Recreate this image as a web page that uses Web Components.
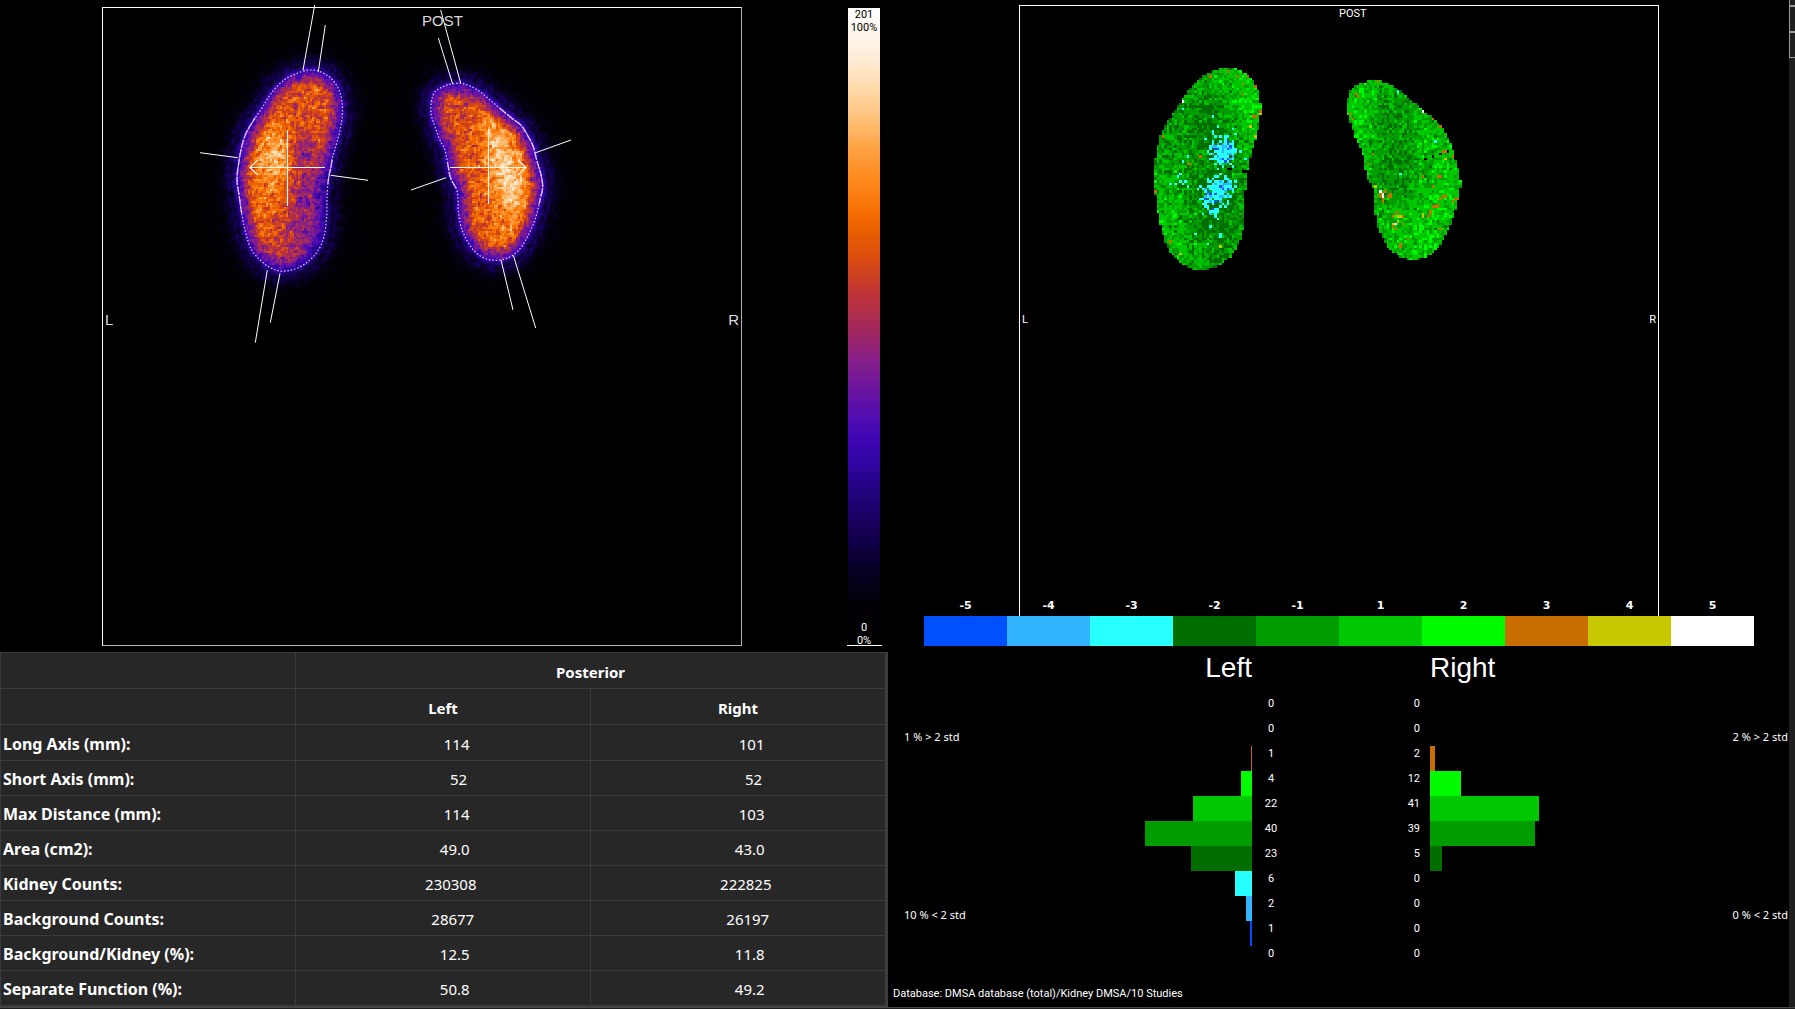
<!DOCTYPE html>
<html lang="en">
<head>
<meta charset="utf-8">
<title>DMSA Kidney Analysis</title>
<style>
  html, body { margin: 0; background: #1e1e1e; color: #fff; }
  body { font-family: Roboto, "Noto Sans", "Liberation Sans", sans-serif; font-size: 11px; line-height: 16px; }
</style>
</head>
<body>
<dmsa-workspace>
  <scan-panel slot="scan">
    <scan-frame large>
      <kidney-scan></kidney-scan>
      <span slot="top">POST</span><span slot="left">L</span><span slot="right">R</span>
    </scan-frame>
    <count-scale slot="scale" max="201" min="0"></count-scale>
  </scan-panel>
  <result-table slot="results"></result-table>
  <deviation-panel slot="deviation">
    <scan-frame>
      <deviation-map></deviation-map>
      <span slot="top">POST</span><span slot="left">L</span><span slot="right">R</span>
    </scan-frame>
    <deviation-legend slot="legend"></deviation-legend>
    <deviation-histogram slot="histograms" side="left" above="1 % &gt; 2 std" below="10 % &lt; 2 std"
      counts="0,0,1,4,22,40,23,6,2,1,0" sizes="0,0,1,11,59,107,61,17,6,2,0">Left</deviation-histogram>
    <deviation-histogram slot="histograms" side="right" above="2 % &gt; 2 std" below="0 % &lt; 2 std"
      counts="0,0,2,12,41,39,5,0,0,0,0" sizes="0,0,5,31,109,105,12,0,0,0,0">Right</deviation-histogram>
    <span slot="database">Database: DMSA database (total)/Kidney DMSA/10 Studies</span>
  </deviation-panel>
</dmsa-workspace>

<script>
/* ---------- shared data ---------- */
const LEVELS = {
  '-5': '#0050ff', '-4': '#32b4ff', '-3': '#28ffff', '-2': '#006e00', '-1': '#009c00',
  '1': '#00c800', '2': '#00fa00', '3': '#c86e00', '4': '#c8c800', '5': '#ffffff'
};
const SCALE = [
  [0, '#000000'], [.063, '#020006'], [.118, '#080024'], [.18, '#150055'], [.235, '#20037a'],
  [.287, '#3004a2'], [.32, '#3c06b2'], [.355, '#500cb2'], [.4, '#6a14a0'], [.447, '#861f88'],
  [.494, '#a2285e'], [.55, '#be3438'], [.604, '#d84a10'], [.65, '#e86000'], [.672, '#f56a00'],
  [.722, '#ff8518'], [.777, '#ffa040'], [.824, '#ffc078'], [.88, '#ffdcb0'], [.934, '#fff0e2'], [1, '#ffffff']
];
/* Rounds an outline off with a Catmull-Rom spline, four points for each control point. */
function smooth(pts) {
  const n = pts.length, out = [];
  for (let i = 0; i < n; i++) {
    const [a, b, c, d] = [-1, 0, 1, 2].map(k => pts[(i + k + n) % n]);
    for (let t = 0; t < 1; t += .25)
      out.push([0, 1].map(k => .5 * (2 * b[k] + (c[k] - a[k]) * t + (2 * a[k] - 5 * b[k] + 4 * c[k] - d[k]) * t * t
        + (3 * b[k] - a[k] - 3 * c[k] + d[k]) * t * t * t)));
  }
  return out;
}
const toFrame = (points, x, y) => smooth(points.map(p => [x + p[0] / 3, y + p[1] / 3]));
const LEFT_KIDNEY = toFrame([[340,213],[362,210],[385,213],[420,232],[443,262],[455,300],[457,345],[450,390],[440,430],
  [428,470],[423,500],[415,540],[411,590],[410,650],[402,710],[385,750],[360,780],[325,803],[280,814],[240,803],
  [205,775],[180,740],[165,690],[155,640],[148,590],[141,540],[146,490],[155,440],[168,400],[190,362],[215,325],
  [240,285],[265,255],[295,232]], 88, -7);
const RIGHT_KIDNEY = toFrame([[188,252],[212,250],[240,258],[270,275],[300,300],[330,325],[360,350],[395,378],[415,410],
  [430,440],[440,480],[452,520],[458,560],[450,600],[438,650],[420,695],[395,740],[365,768],[330,780],[290,777],
  [255,755],[230,720],[213,680],[205,630],[202,575],[182,535],[174,495],[165,450],[150,420],[135,380],[123,340],
  [125,300],[135,275],[165,257]], 288, -7);

/* ---------- helpers ---------- */
function random(seed) {
  return () => {
    seed = seed + 0x6D2B79F5 | 0;
    let t = Math.imul(seed ^ seed >>> 15, 1 | seed);
    t = t + Math.imul(t ^ t >>> 7, 61 | t) ^ t;
    return ((t ^ t >>> 14) >>> 0) / 4294967296;
  };
}
function gaussian(rnd) { return (rnd() + rnd() + rnd() + rnd() - 2) * 1.73; }
function bump(x, y, cx, cy, sx, sy, tilt = 0) {
  const dy = y - cy, dx = x - cx - tilt * dy;
  return Math.exp(-(dx * dx) / (2 * sx * sx) - (dy * dy) / (2 * sy * sy));
}
/* Signed distance to a closed outline, positive inside. */
function depth(poly, x, y) {
  let best = Infinity, inside = false;
  for (let i = 0, j = poly.length - 1; i < poly.length; j = i++) {
    const [ax, ay] = poly[j], [bx, by] = poly[i];
    const vx = bx - ax, vy = by - ay;
    const t = Math.max(0, Math.min(1, ((x - ax) * vx + (y - ay) * vy) / (vx * vx + vy * vy)));
    best = Math.min(best, (x - ax - t * vx) ** 2 + (y - ay - t * vy) ** 2);
    if ((ay > y) !== (by > y) && x < vx * (y - ay) / vy + ax) inside = !inside;
  }
  return Math.sqrt(best) * (inside ? 1 : -1);
}
function hex(c) { return [1, 3, 5].map(i => parseInt(c.substr(i, 2), 16)); }
function scaleColour(v) {
  v = Math.max(0, Math.min(1, v));
  let i = 1;
  while (i < SCALE.length - 1 && SCALE[i][0] < v) i++;
  const [a, ca] = SCALE[i - 1], [b, cb] = SCALE[i], t = (v - a) / (b - a), p = hex(ca), q = hex(cb);
  return `rgb(${p.map((n, k) => Math.round(n + (q[k] - n) * t)).join()})`;
}
/* Turns a map of colour -> cells into one path for each colour. */
function cellPaths(groups, size) {
  let out = '';
  for (const [fill, cells] of groups)
    out += `<path fill="${fill}" d="${cells.map(([x, y]) => `M${x} ${y}h${size}v${size}h-${size}z`).join('')}"/>`;
  return out;
}
function push(groups, key, cell) {
  if (!groups.has(key)) groups.set(key, []);
  groups.get(key).push(cell);
}
const lineOf = pts => 'M' + pts.map(p => p.map(n => n.toFixed(1)).join(' ')).join('L');

class View extends HTMLElement {
  connectedCallback() {
    if (this.shadowRoot) return;
    this.attachShadow({ mode: 'open' }).innerHTML = this.render();
  }
}

/* ---------- layout ---------- */
customElements.define('dmsa-workspace', class extends View {
  render() {
    return `<style>
      :host { display: grid; grid-template-columns: minmax(0, 888fr) minmax(0, 901fr) 6px; min-height: 100vh;
        box-sizing: border-box; background: #000; grid-template-rows: 1fr 2px; }
      main { display: contents; }
      .column { display: flex; flex-direction: column; min-width: 0; }
      .foot { grid-column: 1 / -1; background: #1e1e1e; border-top: 1px solid #484848; }
      .dock { background: #1f1f1f; }
      .dock i { display: block; box-sizing: border-box; height: 26px; border: 1px solid #999; border-right: 0; }
      .dock i:first-child { height: 6px; border-top: 0; }
    </style>
    <main>
      <section class="column"><slot name="scan"></slot><slot name="results"></slot></section>
      <section class="column"><slot name="deviation"></slot></section>
      <aside class="dock"><i></i><i></i><i></i></aside>
      <div class="foot"></div>
    </main>`;
  }
});

customElements.define('scan-panel', class extends View {
  render() {
    return `<style>
      :host { display: grid; grid-template-columns: 102fr 640fr 105fr 35fr 6fr; padding: 7px 0 6px; }
      .image { grid-column: 2; } .scale { grid-column: 4; display: grid; }
    </style><div class="image"><slot></slot></div><div class="scale"><slot name="scale"></slot></div>`;
  }
});

customElements.define('scan-frame', class extends View {
  render() {
    return `<style>
      :host { display: block; position: relative; box-sizing: border-box; aspect-ratio: 640 / 639; border: 1px solid #fff; }
      ::slotted(span) { position: absolute; }
      ::slotted([slot=top]) { top: 0; left: 50%; }
      ::slotted([slot=left]) { bottom: calc(50% - 3px); left: 2px; }
      ::slotted([slot=right]) { bottom: calc(50% - 3px); right: 2px; }
      :host([large]) { font: 15px/20px "Liberation Sans", Arial, sans-serif; color: #dcdcdc; border-color: #fff #b4b4b4 #b4b4b4 #fff; }
      :host([large]) ::slotted([slot=top]) { top: 3px; }
    </style><slot></slot><slot name="top"></slot><slot name="left"></slot><slot name="right"></slot>`;
  }
});

/* ---------- count image ---------- */
customElements.define('kidney-scan', class extends View {
  cells() {
    const rnd = random(41), size = 2, groups = new Map();
    const N = 320, noise = [];
    for (let i = 0; i < N * N; i++) noise.push(gaussian(rnd));
    for (let j = 2; j < 210; j++) for (let i = 20; i < 280; i++) {
      const x = i * size + 1, y = j * size + 1;
      const dl = depth(LEFT_KIDNEY, x, y), dr = depth(RIGHT_KIDNEY, x, y), d = Math.max(dl, dr);
      const k = j * N + i;
      const n = noise[k] * .75 + (noise[k + 1] + noise[k + N]) * .35;
      let v;
      if (d < -75) continue;
      let core;
      if (dl > dr) core = .61 + .15 * bump(x, y, 175, 151, 11, 20) + .07 * bump(x, y, 168, 180, 15, 55)
        - .16 * bump(x, y, 206, 200, 18, 36, -.1) - .11 * bump(x, y, 200, 143, 9, 13)
        - .06 * bump(x, y, 190, 250, 40, 18);
      else core = .62 + .2 * bump(x, y, 400, 150, 12, 34, .25) + .1 * bump(x, y, 406, 190, 17, 34) - .03 * bump(x, y, 350, 100, 25, 30);
      const rise = d > 0 ? Math.min(1, .5 + d / 30) : .5 * Math.exp(-((-d) ** 1.1) / 11);
      v = core * rise + n * (.01 + .054 * Math.min(1, rise * 1.05));
      if (d < -8) v += .03 * Math.exp((d + 8) / 22) + .03 * Math.max(0, 1 + d / 75) + n * .008 * Math.max(0, 1 + d / 75);
      const q = Math.round(v * 80) / 80;
      if (q > .02) push(groups, scaleColour(q), [i * size, j * size]);
    }
    return cellPaths(groups, size);
  }
  render() {
    const firm = [LEFT_KIDNEY.slice(92, 118), LEFT_KIDNEY.slice(37, 46), RIGHT_KIDNEY.slice(20, 54), RIGHT_KIDNEY.slice(97, 106)];
    return `<style>
      :host { display: block; height: 100%; }
      svg { display: block; width: 100%; height: 100%; overflow: visible; }
      .counts { filter: blur(.7px); }
      .outline { fill: none; stroke: #dcc4ff; stroke-width: 1.2; stroke-dasharray: 1.6 1.8; }
      .firm { fill: none; stroke: #dcc4ff; stroke-width: 1.3; stroke-dasharray: 8 1.5; }
      .axes { fill: none; stroke: #fff; stroke-width: 1; }
      .cross { fill: none; stroke: #fff4e6; stroke-width: 1.2; }
    </style>
    <svg viewBox="1 1 638 637" role="img" aria-label="Posterior kidney scan">
      <g class="counts">${this.cells()}</g>
      <path class="outline" d="${lineOf(LEFT_KIDNEY)}Z${lineOf(RIGHT_KIDNEY)}Z"/>
      <path class="firm" d="${firm.map(lineOf).join('')}"/>
      <g transform="translate(-102 -7)">
        <path class="axes" d="M314.7 5L303 70M325.3 25L318.3 71.7M200 152.7L237.7 157.7M330.7 175.3L368 180.3M267.3 270L255.3 342.7M280 273.3L270.3 322.7
          M440.7 10L460.7 83.3M438.3 38L452.7 84M535.7 152.7L571 140M446 177.7L411 190M501 260L513 310M513.3 255.3L535.7 328"/>
        <path class="cross" d="M287.5 130V206M250 167.5H325M257.7 160L250 167.5L257.7 175M488.5 130V204M450 167.5H526M518 160L526 167.5L518 175"/>
      </g>
    </svg>`;
  }
});

/* ---------- deviation image ---------- */
customElements.define('deviation-map', class extends View {
  cells() {
    const rnd = random(7), size = 2.5, groups = new Map(), fixed = new Map();
    const mark = (x0, y0, level, pts) => pts.forEach(([x, y]) =>
      fixed.set(Math.floor((x0 + x / 3) / size) + ',' + Math.floor((y0 + y / 3) / size), level));
    mark(111, 45, 3, [[240,80],[296,64],[325,80],[355,78],[340,103],[378,110],[387,132],[340,132],[370,200],[377,200],
      [98,260],[211,318],[173,341],[181,341],[76,422],[122,577],[393,183]]);
    mark(111, 45, 4, [[152,612],[272,590],[362,230],[378,262],[393,190]]);
    mark(111, 45, 5, [[158,154]]);
    mark(111, 45, -3, [[158,177],[250,199],[262,230],[228,267],[310,236],[348,327],[241,529],[196,552],[272,560],[234,582],
      [250,245],[250,253],[258,262],[272,260],[286,260],[288,267],[265,355],[318,252],[272,550],[265,507],
      [122,402],[145,380],[152,395],[160,400],[168,395],[173,408],[152,372],[138,400],[160,335],[173,320]]);
    mark(111, 45, 0, [[295,356],[303,356],[338,364],[346,364]]);
    mark(311, 55, 3, [[145,64],[78,104],[82,110],[70,177],[62,160],[311,177],[333,199],[100,288],[100,300],[115,312],[130,282],
      [340,275],[348,273],[370,288],[280,350],[320,350],[327,350],[310,380],[335,408],[342,408],[328,415],[320,430],[313,437],
      [320,440],[310,440],[300,455],[300,462],[292,470],[365,422],[372,416],[385,416],[333,507],[235,537],[212,552],[212,560],
      [204,455],[198,460],[190,465],[218,470],[218,490],[190,500],[197,504],[150,400],[150,410],[180,402],[183,410],[172,405],
      [160,418],[160,427],[167,397]]);
    mark(311, 55, 4, [[137,380],[280,462],[280,470],[205,470],[212,470],[190,492],[203,485],[347,297],[228,597]]);
    mark(311, 55, 5, [[153,393],[160,400],[160,408],[198,492],[279,154]]);
    mark(311, 55, -3, [[205,94],[318,244],[212,341]]);
    mark(311, 55, 0, [[288,297],[310,290],[333,282],[355,275]]);
    for (let j = 20; j < 112; j++) for (let i = 50; i < 180; i++) {
      const x = (i + .5) * size, y = (j + .5) * size;
      const dl = depth(LEFT_KIDNEY, x, y), dr = depth(RIGHT_KIDNEY, x, y);
      const n = gaussian(rnd), u = rnd(), w = rnd();
      if (Math.max(dl, dr) < -1) continue;
      let z, level;
      if (dl > dr) {
        z = -.15 + n * .6 - 1.1 * bump(x, y, 194, 180, 17, 55) + .9 * bump(x, y, 228, 88, 20, 32)
          + .5 * bump(x, y, 154, 230, 16, 40) + .5 * bump(x, y, 182, 155, 9, 7) - .5 * bump(x, y, 192, 105, 14, 12) - .25 * bump(x, y, 150, 130, 22, 25);
        level = z < -.75 ? -2 : z < .02 ? -1 : z < 1.05 ? 1 : 2;
        const cold = Math.max(bump(x, y, 204, 147, 10, 10), bump(x, y, 199, 186, 12, 11, -.3), .85 * bump(x, y, 192, 203, 6, 7));
        if (cold > u * .68 + .2) level = cold > .5 && w < .4 ? (w < .16 ? -5 : -4) : -3;
      } else {
        z = .25 + n * .6 - .95 * bump(x, y, 376, 152, 16, 44) - .5 * bump(x, y, 372, 105, 20, 14) + .3 * bump(x, y, 408, 215, 30, 30)
          + .5 * bump(x, y, 340, 110, 9, 40) - .5 * bump(x, y, 388, 175, 14, 12);
        level = z < -.95 ? -2 : z < .02 ? -1 : z < 1 ? 1 : 2;
      }
      const key = i + ',' + j;
      if (fixed.has(key)) level = fixed.get(key);
      if (level) push(groups, LEVELS[level], [i * size, j * size]);
    }
    return cellPaths(groups, size);
  }
  render() {
    return `<style>
      :host { display: block; height: 100%; }
      svg { display: block; width: 100%; height: 100%; }
    </style>
    <svg viewBox="1 1 638 637" shape-rendering="crispEdges" role="img" aria-label="Deviation from normal database">${this.cells()}</svg>`;
  }
});

customElements.define('count-scale', class extends View {
  render() {
    const stops = SCALE.map(([v, c]) => `${c} ${(v * 100).toFixed(1)}%`).join(',');
    return `<style>
      :host { display: flex; flex-direction: column; justify-content: space-between; box-sizing: border-box; text-align: center;
        line-height: 13px; border-bottom: 1px solid #fff; padding-right: 1px; margin-top: 1px;
        background: linear-gradient(to top, ${stops}) 1px 0 / calc(100% - 3px) 100% no-repeat; }
      div { display: flex; flex-direction: column; }
      .max { color: #000; }
      .min { margin-bottom: -2px; }
    </style>
    <div class="max"><span>${this.getAttribute('max')}</span><span>100%</span></div>
    <div class="min"><span>${this.getAttribute('min')}</span><span>0%</span></div>`;
  }
});

/* ---------- results ---------- */
customElements.define('result-table', class extends View {
  render() {
    const rows = [['Long Axis (mm):', '114', '101'], ['Short Axis (mm):', '52', '52'], ['Max Distance (mm):', '114', '103'],
      ['Area (cm2):', '49.0', '43.0'], ['Kidney Counts:', '230308', '222825'], ['Background Counts:', '28677', '26197'],
      ['Background/Kidney (%):', '12.5', '11.8'], ['Separate Function (%):', '50.8', '49.2']];
    return `<style>
      :host { display: block; flex: 1; background: #272727; border-right: 2px solid #3c3c3c; border-bottom: 1px solid #3c3c3c; }
      table { width: 100%; table-layout: fixed; border-collapse: collapse; font: 15px/20px "Noto Sans", sans-serif; }
      th, td { box-sizing: border-box; border: 1px solid #3c3c3c; padding: 2px 0 0; text-align: center; height: 35px; }
      thead th, thead td, tbody tr:first-child > * { height: 36px; }
      tr > :first-child { text-align: left; padding-left: 2px; }
      th { font-weight: 700; }
      tbody th { font-size: 16px; }
      td { white-space: pre; }
    </style>
    <table>
      <thead>
        <tr><td></td><th colspan="2" scope="colgroup">Posterior</th></tr>
        <tr><td></td><th scope="col">Left</th><th scope="col">Right</th></tr>
      </thead>
      <tbody>${rows.map(([h, a, b]) => `<tr><th scope="row">${h}</th><td>${a.padStart(10)}</td><td>${b.padStart(10)}</td></tr>`).join('')}</tbody>
    </table>`;
  }
});

/* ---------- deviation panel ---------- */
customElements.define('deviation-panel', class extends View {
  render() {
    return `<style>
      :host { display: flex; flex-direction: column; flex: 1; padding-top: 5px; }
      .image { padding: 0 calc(100% * 130 / 901) 0 calc(100% * 131 / 901); }
      .legend { position: relative; margin-top: -48px; padding: 0 calc(100% * 35 / 901) 0 calc(100% * 36 / 901); }
      .charts { display: grid; grid-template-columns: 453fr 448fr; }
      footer { margin-top: 15px; padding-left: 5px; }
    </style>
    <div class="image"><slot></slot></div>
    <div class="legend"><slot name="legend"></slot></div>
    <div class="charts"><slot name="histograms"></slot></div>
    <footer><slot name="database"></slot></footer>`;
  }
});

customElements.define('deviation-legend', class extends View {
  render() {
    return `<style>
      :host { display: block; font: 700 11px/20px "DejaVu Sans", sans-serif; }
      ul { display: flex; margin: 0; padding: 0; list-style: none; text-align: center; }
      li { flex: 1; }
      i { display: block; height: 30px; }
    </style>
    <ul>${[-5, -4, -3, -2, -1, 1, 2, 3, 4, 5].map(n => `<li>${n}<i style="background:${LEVELS[n]}"></i></li>`).join('')}</ul>`;
  }
});

customElements.define('deviation-histogram', class extends View {
  render() {
    const get = n => this.getAttribute(n);
    const counts = get('counts').split(','), sizes = get('sizes').split(',');
    const colours = [5, 4, 3, 2, 1, -1, -2, -3, -4, -5, -5].map(n => LEVELS[n]);
    const note = n => get(n).replace('<', '&lt;').replace('>', '&gt;');
    return `<style>
      :host { display: grid; grid-template-columns: 1fr 110px 89px; grid-template-rows: 50px auto; }
      :host([side=right]) { grid-template-columns: 89px 110px 1fr; }
      h2 { grid-row: 1; grid-column: 1 / 3; margin: 0; text-align: right; font: 28px/44px "Liberation Sans", Arial, sans-serif; }
      :host([side=right]) h2 { grid-column: 2 / 4; text-align: left; }
      .notes { grid-row: 2; grid-column: 1; display: flex; flex-direction: column; gap: 162px; padding: 33px 0 0 16px;
        white-space: nowrap; font-family: "Noto Sans", sans-serif; }
      :host([side=right]) .notes { grid-column: 3; padding: 33px 1px 0 0; text-align: right; }
      ol { grid-row: 2; grid-column: 2 / 4; display: grid; grid-template-columns: subgrid; grid-auto-rows: 25px; margin: 0; padding: 0; list-style: none; }
      :host([side=right]) ol { grid-column: 1 / 3; }
      li { display: contents; }
      i { justify-self: end; }
      span { width: 38px; text-align: center; }
      :host([side=right]) i { justify-self: start; }
      :host([side=right]) span { width: auto; text-align: right; padding-right: 10px; }
    </style>
    <h2><slot></slot></h2>
    <div class="notes"><div>${note('above')}</div><div>${note('below')}</div></div>
    <ol>${counts.map((c, k) => {
      const bar = `<i style="width:${sizes[k]}px;background:${colours[k]}"></i>`, label = `<span>${c}</span>`;
      return `<li>${get('side') === 'left' ? bar + label : label + bar}</li>`;
    }).join('')}</ol>`;
  }
});
</script>
</body>
</html>
